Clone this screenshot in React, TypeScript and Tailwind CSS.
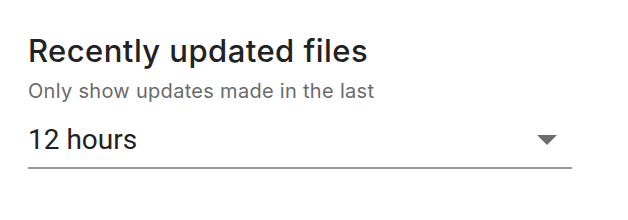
export default function App() {
  return (
    <div className="min-h-screen bg-white pl-[28px] pt-[31px]">
      <h2 className="text-[31px] leading-[40px] font-medium text-[#222222] font-['Inter',sans-serif] tracking-[0.45px]">
        Recently updated files
      </h2>
      <p className="mt-[7px] text-[20px] leading-[26px] text-[#6b6b6b] font-['Inter',sans-serif] tracking-[0.3px]">
        Only show updates made in the last
      </p>
      <div className="mt-[19px] w-[544px] flex items-center justify-between border-b-2 border-[#9a9a9a] pb-[10px]">
        <span className="text-[28px] leading-[34px] text-[#222222] font-['Roboto',sans-serif]">12 hours</span>
        <svg width="20" height="11" viewBox="0 0 20 11" className="mr-[15px]">
          <path d="M0 0 L20 0 L10 10 Z" fill="#6e6e6e" />
        </svg>
      </div>
    </div>
  );
}
